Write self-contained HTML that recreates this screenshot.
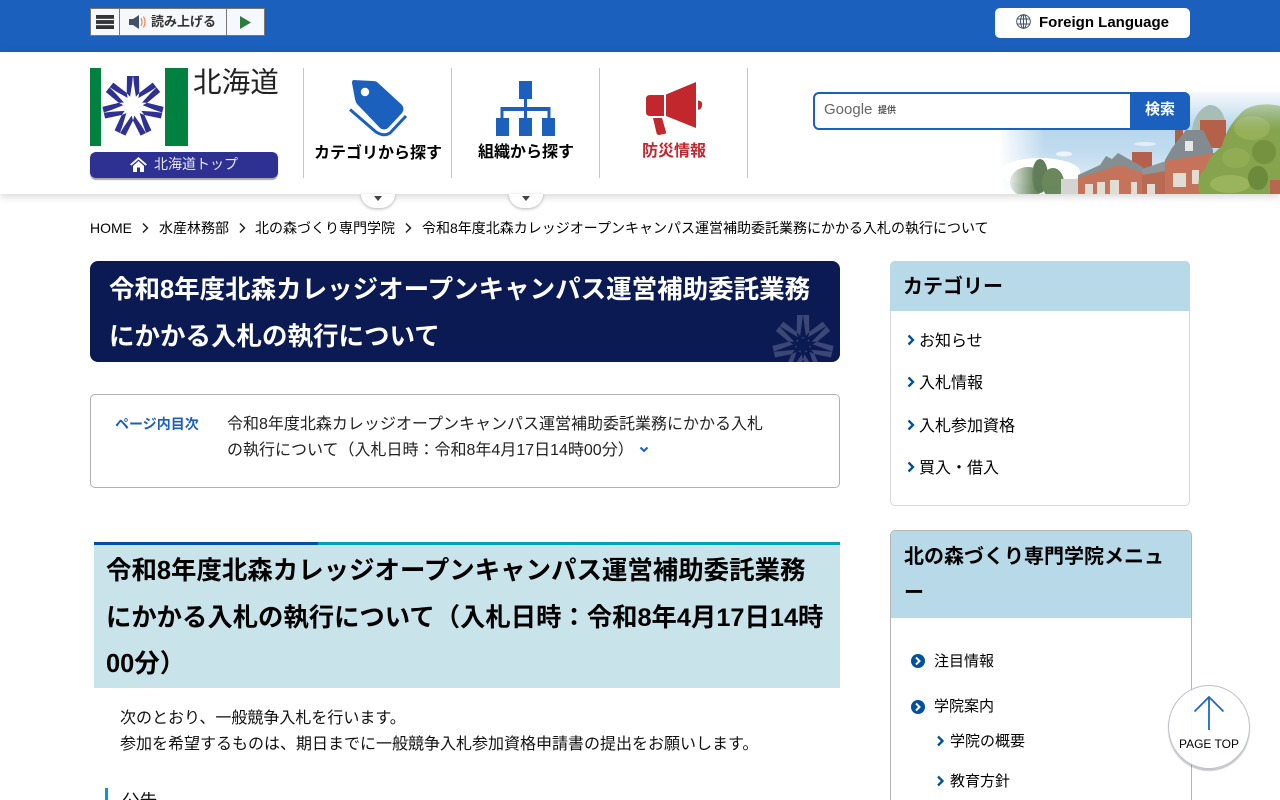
<!DOCTYPE html>
<html lang="ja">
<head>
<meta charset="utf-8">
<title>令和8年度北森カレッジオープンキャンパス運営補助委託業務にかかる入札の執行について</title>
<style>
html,body{margin:0;padding:0;background:#fff;width:1280px;height:800px;overflow:hidden;}
#w{position:relative;width:1280px;height:800px;overflow:hidden;font-family:"Liberation Sans","Noto Sans CJK JP",sans-serif;color:#000;}
.a{position:absolute;white-space:nowrap;}
.line{position:absolute;top:68px;width:1px;height:110px;background:#c4c4cc;}
.lab{position:absolute;width:148px;text-align:center;font-size:16px;font-weight:bold;line-height:24px;}
.tab{position:absolute;top:194px;width:34px;height:14px;background:#fff;border-radius:0 0 17px 17px;box-shadow:0 1px 3px rgba(0,0,0,.3);}
.tab:after{content:"";position:absolute;left:13px;top:2px;border:4px solid transparent;border-top:5px solid #444;border-bottom:0;}
.crumb{font-size:14px;line-height:20px;top:218px;}
.side{font-size:16px;line-height:24px;}
.side2{font-size:15px;line-height:22px;}
svg{display:block;}
</style>
</head>
<body>
<div id="w">
<div class="a" style="left:0;top:0;width:1280px;height:52px;background:#1b60bd;"></div>
<div class="a" style="left:0;top:52px;width:1280px;height:142px;background:#fff;box-shadow:0 2px 8px rgba(0,0,0,.18);"></div>

<!-- photo -->
<svg class="a" style="left:0;top:0;" width="1280" height="194" viewBox="0 0 1280 194">
<defs>
<linearGradient id="sky" x1="0" y1="92" x2="0" y2="194" gradientUnits="userSpaceOnUse"><stop offset="0" stop-color="#f6f9fc"/><stop offset=".35" stop-color="#b6d6ec"/><stop offset=".6" stop-color="#c2dcef"/><stop offset="1" stop-color="#eef4f8"/></linearGradient>
<linearGradient id="fade" x1="998" y1="0" x2="1045" y2="0" gradientUnits="userSpaceOnUse"><stop offset="0" stop-color="#000"/><stop offset="1" stop-color="#fff"/></linearGradient>
<linearGradient id="fadeT" x1="1005" y1="0" x2="1035" y2="0" gradientUnits="userSpaceOnUse"><stop offset="0" stop-color="#000"/><stop offset="1" stop-color="#eee"/></linearGradient>
<linearGradient id="treeF" x1="0" y1="100" x2="0" y2="130" gradientUnits="userSpaceOnUse"><stop offset="0" stop-color="#666"/><stop offset="1" stop-color="#fff"/></linearGradient>
<mask id="m1"><rect x="990" y="92" width="300" height="102" fill="url(#fade)"/></mask>
<mask id="m3"><rect x="990" y="140" width="90" height="54" fill="url(#fadeT)"/></mask>
<mask id="m2"><rect x="1190" y="92" width="90" height="102" fill="url(#treeF)"/></mask>
</defs>
<g mask="url(#m1)">
<rect x="1000" y="92" width="280" height="102" fill="url(#sky)"/>
<ellipse cx="1040" cy="172" rx="40" ry="14" fill="#fff"/>
<ellipse cx="1066" cy="174" rx="14" ry="6" fill="#fff"/>
<ellipse cx="1064" cy="154" rx="8" ry="2.500" fill="#eef4f8"/>
<ellipse cx="1145" cy="144" rx="11" ry="2" fill="#e4eef6"/>
</g>
<g mask="url(#m3)">
<ellipse cx="1028" cy="182" rx="18" ry="15" fill="#65825a"/>
<ellipse cx="1040" cy="176" rx="8" ry="17" fill="#55734c"/>
<ellipse cx="1053" cy="183" rx="11" ry="15" fill="#5f7f50"/>
</g>
<rect x="1061" y="179" width="19" height="15" fill="#d4d4d2"/>
<!-- dome + back tower -->
<path d="M1192 130 C1194 112 1206 105 1210 105 C1220 105 1226 116 1226 130Z" fill="#a6beb6"/>
<rect x="1200" y="120" width="26" height="28" fill="#b5614a"/>
<rect x="1175" y="130" width="8" height="14" fill="#a9604c"/>
<rect x="1132" y="152" width="20" height="18" fill="#b5604a"/>
<!-- roofs -->
<path d="M1078 175 L1100 165 L1106 156 L1112 159 L1118 153 L1143 167 L1143 174 L1120 166 L1078 179Z" fill="#858e90"/>
<path d="M1142 169 L1166 161 L1166 172 L1142 176Z" fill="#8d9698"/>
<path d="M1165 160 L1172 148 L1186 130 L1203 130 L1213 150 L1213 154 L1165 162Z" fill="#828c90"/>
<rect x="1185" y="141" width="8" height="10" fill="#e6e8e6"/>
<!-- walls -->
<path d="M1078 178 L1120 165 L1143 173 L1143 194 L1078 194Z" fill="#c5745b"/>
<path d="M1142 175 L1166 171 L1166 194 L1142 194Z" fill="#b96a52"/>
<path d="M1165 161 L1213 153 L1240 150 L1240 194 L1165 194Z" fill="#c5745b"/>
<rect x="1270" y="180" width="10" height="14" fill="#b5674f"/>
<g fill="#e2ddd2">
<rect x="1085" y="184" width="8" height="10"/><rect x="1097" y="182" width="8" height="12"/><rect x="1110" y="180" width="9" height="14"/><rect x="1131" y="182" width="6" height="12"/><rect x="1147" y="184" width="8" height="10"/><rect x="1173" y="173" width="13" height="14"/><rect x="1192" y="170" width="7" height="14"/>
</g>
<!-- right tree -->
<g mask="url(#m2)">
<path d="M1200 194 C1196 184 1200 172 1206 168 C1208 158 1214 153 1222 146 C1226 130 1234 120 1243 111 C1252 104 1268 103 1280 106 L1280 180 L1270 180 L1270 194Z" fill="#86a44d"/>
<ellipse cx="1252" cy="128" rx="18" ry="12" fill="#96b058"/>
<ellipse cx="1236" cy="158" rx="14" ry="10" fill="#92ac55"/>
<ellipse cx="1264" cy="152" rx="12" ry="12" fill="#74923f"/>
<ellipse cx="1230" cy="184" rx="20" ry="9" fill="#9ab45e"/>
<ellipse cx="1258" cy="178" rx="10" ry="12" fill="#6b8a3c"/>
</g>
</svg>

<!-- toolbar -->
<div class="a" style="left:90px;top:8px;width:175px;height:28px;box-sizing:border-box;border:1px solid #777;background:#f5f8fc;"></div>
<div class="a" style="left:119px;top:8px;width:1px;height:28px;background:#777;"></div>
<div class="a" style="left:226px;top:8px;width:1px;height:28px;background:#777;"></div>
<svg class="a" style="left:96px;top:15px;" width="18" height="14"><rect y="0" width="18" height="3.800" fill="#333"/><rect y="5.100" width="18" height="3.800" fill="#333"/><rect y="10.200" width="18" height="3.800" fill="#333"/></svg>
<svg class="a" style="left:128px;top:14px;" width="20" height="16"><path d="M1 5 h4 l6-4 v14 l-6-4 h-4z" fill="#44506a"/><path d="M13 4 q2 4 0 8" stroke="#f08a5a" stroke-width="1.300" fill="none"/><path d="M15.500 2.500 q3 5.500 0 11" stroke="#f08a5a" stroke-width="1.300" fill="none"/></svg>
<div class="a" style="left:151px;top:12px;font-size:13px;line-height:20px;font-weight:bold;color:#333;">読み上げる</div>
<svg class="a" style="left:240px;top:16px;" width="12" height="13"><path d="M0 0 L11 6.500 L0 13Z" fill="#2a7d3c"/></svg>

<div class="a" style="left:995px;top:8px;width:195px;height:30px;background:#fff;border-radius:5px;"></div>
<svg class="a" style="left:1016px;top:14px;" width="15" height="15" viewBox="0 0 15 15" fill="none" stroke="#44506a" stroke-width="1"><circle cx="7.500" cy="7.500" r="6.800"/><ellipse cx="7.500" cy="7.500" rx="3" ry="6.800"/><path d="M1 5 H14 M1 10 H14 M7.500 1 V14"/></svg>
<div class="a" style="left:1039px;top:13px;font-size:15px;line-height:20px;font-weight:bold;">Foreign Language</div>

<!-- logo -->
<div class="a" style="left:90px;top:68px;width:11px;height:78px;background:#00813f;"></div>
<div class="a" style="left:165px;top:68px;width:23px;height:78px;background:#00813f;"></div>
<svg class="a" style="left:101px;top:74px;" width="64" height="64" viewBox="-32 -32 64 64">
<defs>
<g id="arm"><path d="M-6.300 -13 L-6 -30 L6 -30 L6.300 -13 L0 -6 Z" fill="#2e3192"/></g>
<g id="armw"><path d="M-3.200 -7.500 L-.9 -22 L0 -31 L.9 -22 L3.200 -7.500 Z" fill="#fff"/></g>
</defs>
<use href="#arm"/><use href="#arm" transform="rotate(51.43)"/><use href="#arm" transform="rotate(102.86)"/><use href="#arm" transform="rotate(154.29)"/><use href="#arm" transform="rotate(205.71)"/><use href="#arm" transform="rotate(257.14)"/><use href="#arm" transform="rotate(308.57)"/>
<circle r="8.500" fill="#fff"/>
<use href="#armw"/><use href="#armw" transform="rotate(51.43)"/><use href="#armw" transform="rotate(102.86)"/><use href="#armw" transform="rotate(154.29)"/><use href="#armw" transform="rotate(205.71)"/><use href="#armw" transform="rotate(257.14)"/><use href="#armw" transform="rotate(308.57)"/>
</svg>
<div class="a" style="left:193px;top:63px;font-size:28.600px;line-height:40px;color:#222;">北海道</div>
<div class="a" style="left:90px;top:152px;width:188px;height:26px;background:#2e3192;border-radius:6px;box-shadow:0 2px 1px rgba(0,0,0,.35);"></div>
<svg class="a" style="left:130px;top:157px;" width="17" height="15" viewBox="0 0 17 15"><path d="M8.500 0 L17 7.500 L15.500 8.500 L8.500 2.500 L1.500 8.500 L0 7.500Z M3 9 L8.500 4 L14 9 V15 H10 V10.500 H7 V15 H3Z" fill="#fff"/></svg>
<div class="a" style="left:154px;top:154px;font-size:14px;line-height:20px;color:#e8e8f6;">北海道トップ</div>

<div class="line" style="left:303px;"></div>
<div class="line" style="left:451px;"></div>
<div class="line" style="left:599px;"></div>
<div class="line" style="left:747px;"></div>

<!-- nav icons -->
<svg class="a" style="left:340px;top:70px;" width="380" height="75" viewBox="340 70 380 75">
<path d="M353 80 Q352 81 352 83 L355 99 Q355.500 102 357 104 L380 128 Q384 131 388 128 L402 113 Q405 109 402 105 L377 82 Q375.500 81 373 81Z" fill="#1b60bd"/>
<circle cx="365" cy="92" r="4.200" fill="#fff"/>
<path d="M350 109.500 L376 132 Q384 137 390 133 L406 116" fill="none" stroke="#1b60bd" stroke-width="3"/>
<g fill="#1b60bd"><rect x="519" y="81" width="13" height="18"/><rect x="496" y="118" width="13" height="18"/><rect x="519" y="118" width="13" height="18"/><rect x="542" y="118" width="13" height="18"/><path d="M524 99 h3 v8 h23.500 v11 h-3 v-7 h-20.500 v7 h-3 v-7 h-20.500 v7 h-3 v-11 h23.500z"/></g>
<g fill="#c1272d"><path d="M650 95 H664 V116 H650 Q646 116 646 112 V99 Q646 95 650 95Z"/><path d="M666 94.500 L696 82 V128 L666 116Z"/><path d="M698 100.500 Q703 101 702 105.500 Q702 109 698 110Z"/><path d="M653 118 H662 L666 132 Q666 134 664 134 L659 135 Q657 135 656.500 133Z"/></g>
</svg>
<div class="lab" style="left:304px;top:142px;">カテゴリから探す</div>
<div class="lab" style="left:452px;top:141px;">組織から探す</div>
<div class="lab" style="left:600px;top:140px;color:#c1272d;">防災情報</div>
<div class="tab" style="left:361px;"></div>
<div class="tab" style="left:509px;"></div>

<!-- search -->
<div class="a" style="left:813px;top:92px;width:377px;height:38px;box-sizing:border-box;border:2px solid #1b60bd;border-radius:6px;background:#fff;"></div>
<div class="a" style="left:1130px;top:92px;width:60px;height:38px;background:#1b60bd;border-radius:0 6px 6px 0;color:#fff;font-size:15px;font-weight:bold;line-height:36px;text-align:center;">検索</div>
<div class="a" style="left:824px;top:99px;font-size:15px;line-height:22px;color:#666;">Google</div>
<div class="a" style="left:878px;top:103px;font-size:9px;line-height:14px;color:#555;font-weight:bold;">提供</div>

<!-- breadcrumb -->
<div class="a crumb" style="left:90px;">HOME</div>
<div class="a crumb" style="left:159px;">水産林務部</div>
<div class="a crumb" style="left:255px;">北の森づくり専門学院</div>
<div class="a crumb" style="left:422px;">令和8年度北森カレッジオープンキャンパス運営補助委託業務にかかる入札の執行について</div>
<svg class="a" style="left:0;top:222px;" width="420" height="12" fill="none" stroke="#222" stroke-width="1.500"><path d="M143 1.500 L147.500 6 L143 10.500"/><path d="M240 1.500 L244.500 6 L240 10.500"/><path d="M406 1.500 L410.500 6 L406 10.500"/></svg>

<!-- h1 -->
<div class="a" style="left:90px;top:261px;width:750px;height:101px;background:#0b1a52;border-radius:8px;overflow:hidden;">
<svg class="a" style="left:681px;top:52px;" width="64" height="64" viewBox="-32 -32 64 64" opacity=".2">
<defs><g id="arm2"><path d="M-6.300 -13 L-6 -30 L6 -30 L6.300 -13 L0 -6 Z" fill="#fff"/><path d="M-3 -7.700 L-1 -23 L0 -31 L1 -23 L3 -7.700Z" fill="#0b1a52"/></g></defs>
<use href="#arm2"/><use href="#arm2" transform="rotate(51.43)"/><use href="#arm2" transform="rotate(102.86)"/><use href="#arm2" transform="rotate(154.29)"/><use href="#arm2" transform="rotate(205.71)"/><use href="#arm2" transform="rotate(257.14)"/><use href="#arm2" transform="rotate(308.57)"/>
</svg>
<div class="a" style="left:19px;top:6px;font-size:25.500px;line-height:47px;font-weight:bold;color:#fff;">令和8年度北森カレッジオープンキャンパス運営補助委託業務<br>にかかる入札の執行について</div>
</div>

<!-- toc -->
<div class="a" style="left:90px;top:394px;width:750px;height:94px;box-sizing:border-box;border:1px solid #b0b0b0;border-radius:5px;"></div>
<div class="a" style="left:115px;top:414px;font-size:14px;line-height:20px;font-weight:bold;color:#1b60bd;">ページ内目次</div>
<div class="a" style="left:227px;top:412px;font-size:16px;line-height:26px;color:#222;">令和8年度北森カレッジオープンキャンパス運営補助委託業務にかかる入札<br>の執行について（入札日時：令和8年4月17日14時00分）</div>
<svg class="a" style="left:639px;top:446px;" width="10" height="8" fill="none" stroke="#1b60bd" stroke-width="2"><path d="M1.500 1.500 L5 5 L8.500 1.500"/></svg>

<!-- h2 -->
<div class="a" style="left:94px;top:542px;width:746px;height:146px;background:#c8e3ea;"></div>
<div class="a" style="left:94px;top:542px;width:746px;height:3px;background:#00a0c0;"></div>
<div class="a" style="left:94px;top:542px;width:224px;height:3px;background:#0050a0;"></div>
<div class="a" style="left:106px;top:548px;font-size:25.450px;line-height:46.500px;font-weight:bold;">令和8年度北森カレッジオープンキャンパス運営補助委託業務<br><span style="font-size:25.350px;">にかかる入札の執行について（入札日時：令和8年4月17日14時</span><br>00分）</div>
<div class="a" style="left:120px;top:706px;font-size:16px;line-height:26px;color:#111;">次のとおり、一般競争入札を行います。<br>参加を希望するものは、期日までに一般競争入札参加資格申請書の提出をお願いします。</div>
<div class="a" style="left:105px;top:788px;width:3px;height:14px;background:#00a0c0;"></div>
<div class="a" style="left:122px;top:788px;font-size:17.600px;line-height:26px;color:#111;">公告</div>

<!-- sidebar 1 -->
<div class="a" style="left:890px;top:261px;width:300px;height:245px;box-sizing:border-box;border:1px solid #d6d6d6;border-radius:5px;"></div>
<div class="a" style="left:890px;top:261px;width:300px;height:50px;background:#b7d9e8;border-radius:5px 5px 0 0;"></div>
<div class="a" style="left:903px;top:272px;font-size:20px;line-height:30px;font-weight:bold;">カテゴリー</div>
<div class="a side" style="left:919px;top:330px;">お知らせ</div>
<div class="a side" style="left:919px;top:372px;">入札情報</div>
<div class="a side" style="left:919px;top:415px;">入札参加資格</div>
<div class="a side" style="left:919px;top:457px;">買入・借入</div>
<svg class="a" style="left:900px;top:320px;" width="20" height="160" fill="none" stroke="#00509e" stroke-width="2.300"><path d="M8.500 15.500 L13 20 L8.500 24.500"/><path d="M8.500 57.500 L13 62 L8.500 66.500"/><path d="M8.500 100.500 L13 105 L8.500 109.500"/><path d="M8.500 142.500 L13 147 L8.500 151.500"/></svg>

<!-- sidebar 2 -->
<div class="a" style="left:890px;top:530px;width:302px;height:290px;box-sizing:border-box;border:1px solid #b5b5b5;border-radius:5px 5px 0 0;"></div>
<div class="a" style="left:891px;top:531px;width:300px;height:87px;background:#b7d9e8;border-radius:4px 4px 0 0;"></div>
<div class="a" style="left:904px;top:539px;font-size:20px;line-height:36px;font-weight:bold;">北の森づくり専門学院メニュ<br>ー</div>
<svg class="a" style="left:900px;top:645px;" width="60" height="150"><circle cx="18" cy="16" r="7" fill="#00509e"/><circle cx="18" cy="62" r="7" fill="#00509e"/><g fill="none" stroke="#fff" stroke-width="2"><path d="M16 12.500 L19.500 16 L16 19.500"/><path d="M16 58.500 L19.500 62 L16 65.500"/></g><g fill="none" stroke="#00509e" stroke-width="2.300"><path d="M38 91.500 L42.500 96 L38 100.500"/><path d="M38 131.500 L42.500 136 L38 140.500"/></g></svg>
<div class="a side2" style="left:934px;top:651px;">注目情報</div>
<div class="a side2" style="left:934px;top:696px;">学院案内</div>
<div class="a side2" style="left:950px;top:731px;">学院の概要</div>
<div class="a side2" style="left:950px;top:771px;">教育方針</div>

<!-- page top -->
<div class="a" style="left:1168px;top:685px;width:82px;height:84px;box-sizing:border-box;border:1px solid #bcc0c8;border-radius:50%;background:rgba(255,255,255,.93);box-shadow:0 2px 1px rgba(0,0,0,.22);"></div>
<svg class="a" style="left:1190px;top:694px;" width="38" height="38" fill="none" stroke="#1f66c4" stroke-width="1.800"><path d="M19 36 V3"/><path d="M4.500 17.500 L19 3 L33.500 17.500"/></svg>
<div class="a" style="left:1168px;top:736px;width:82px;text-align:center;font-size:12px;line-height:16px;">PAGE TOP</div>
</div>
</body>
</html>
